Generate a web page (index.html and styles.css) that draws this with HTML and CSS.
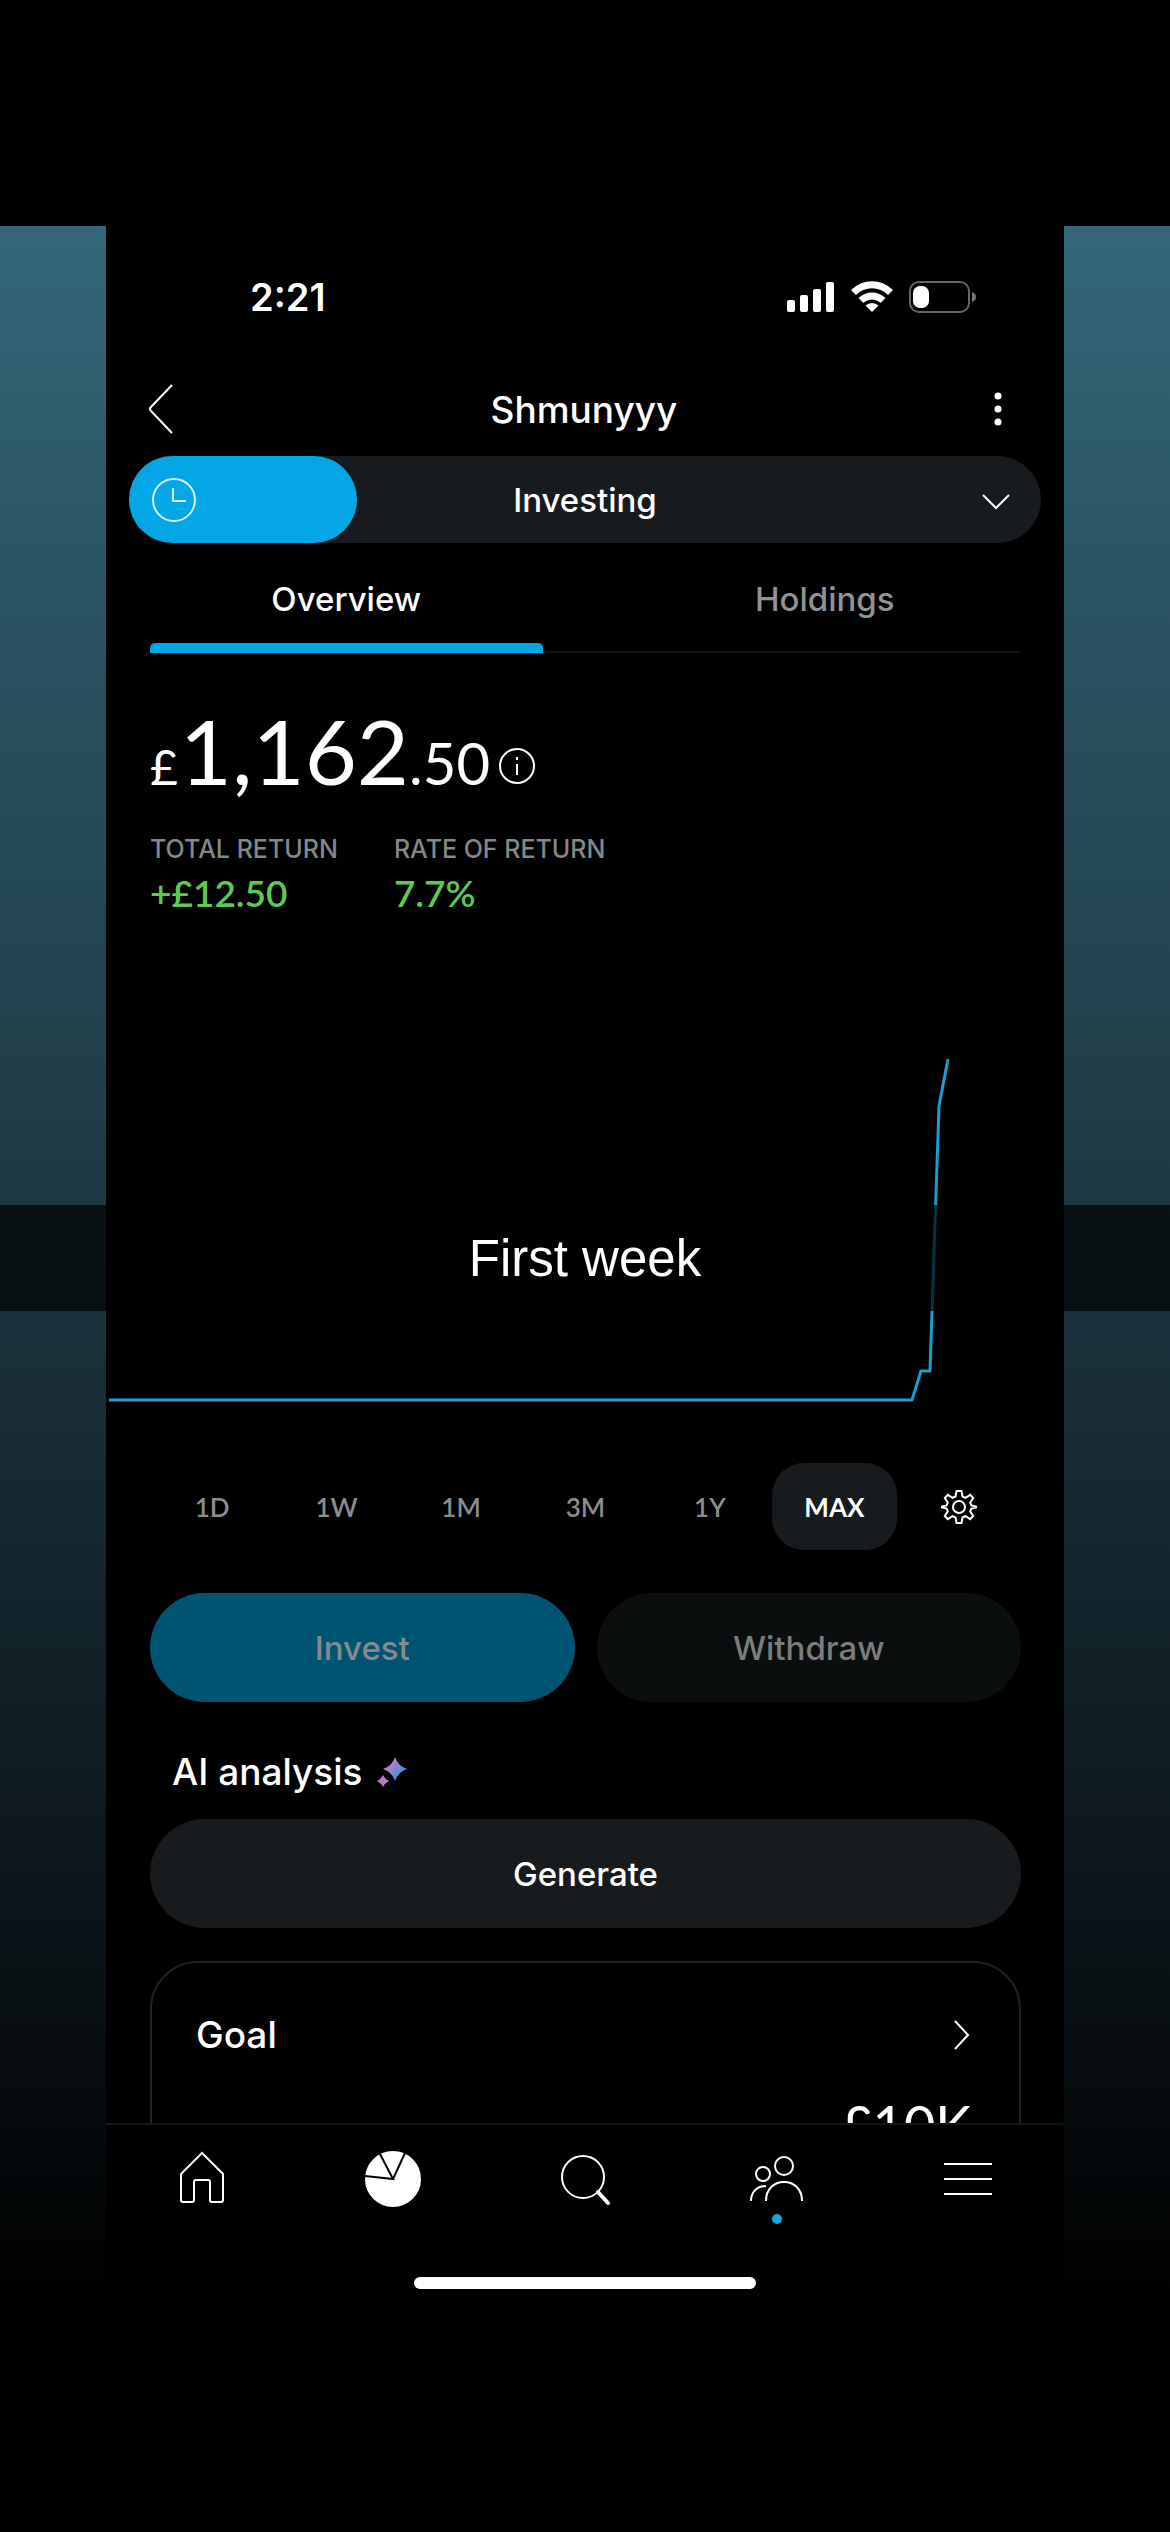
FILE: index.html
```html
<!DOCTYPE html>
<html lang="en">
<head>
  <meta charset="UTF-8">
  <meta name="viewport" content="width=device-width, initial-scale=1.0">
  <title>Shmunyyy - Investing</title>
  <link rel="stylesheet" href="styles.css">
</head>
<body>
  <div class="story">
    <div class="phone">
      <div class="status-bar">
        <span class="clock">2:21</span>
        <div class="status-icons">
          <svg class="signal" width="48" height="32" viewBox="0 0 48 32">
            <rect x="0" y="19" width="8" height="12" rx="2"/>
            <rect x="13" y="14" width="8" height="17" rx="2"/>
            <rect x="26" y="8" width="8" height="23" rx="2"/>
            <rect x="39" y="1" width="8" height="30" rx="2"/>
          </svg>
          <svg class="wifi" width="42" height="32" viewBox="0 0 42 32">
            <path d="M2.500 11.500a26 26 0 0 1 37 0"/>
            <path d="M10 19.500a15.500 15.500 0 0 1 22 0"/>
            <path d="M21 31l-6.500-6.500a9.500 9.500 0 0 1 13 0z" fill="#fff" stroke="none"/>
          </svg>
          <svg class="battery" width="67" height="32" viewBox="0 0 67 32">
            <rect x="1" y="1" width="59" height="30" rx="9" stroke="#666"/>
            <rect x="4" y="5" width="16" height="22" rx="7" fill="#fff" stroke="none"/>
            <path d="M63 11c3 1 4 3 4 5s-1 4-4 5z" fill="#777" stroke="none"/>
          </svg>
        </div>
      </div>

      <header class="header">
        <button class="icon-btn" type="button" aria-label="Back">
          <svg width="26" height="52" viewBox="0 0 26 52"><path d="M24 2L3 24q-2 2 0 4l21 22"/></svg>
        </button>
        <h1>Shmunyyy</h1>
        <button class="icon-btn more" type="button" aria-label="More">
          <svg width="8" height="36" viewBox="0 0 8 36"><circle cx="4" cy="5" r="3.500"/><circle cx="4" cy="18" r="3.500"/><circle cx="4" cy="31" r="3.500"/></svg>
        </button>
      </header>

      <div class="account">
        <select id="account" aria-label="Account">
          <option>Investing</option>
        </select>
        <div class="account-badge">
          <svg width="46" height="46" viewBox="0 0 46 46"><circle cx="23" cy="23" r="21"/><path d="M22 11v13h13"/></svg>
        </div>
        <svg class="account-arrow" width="28" height="16" viewBox="0 0 28 16"><path d="M1 1l13 13L27 1"/></svg>
      </div>

      <main class="content">
        <div class="tabs" role="tablist">
          <button class="tab active" type="button" role="tab" aria-selected="true">Overview</button>
          <button class="tab" type="button" role="tab" aria-selected="false">Holdings</button>
        </div>

        <div class="balance">
          <span class="currency">£</span><span class="whole">1,162</span><span class="pence">.50</span>
          <svg width="38" height="38" viewBox="0 0 38 38"><circle cx="19" cy="19" r="17"/><path d="M19 17v11M19 10v3"/></svg>
        </div>

        <dl class="returns">
          <div>
            <dt>TOTAL RETURN</dt>
            <dd>+£12.50</dd>
          </div>
          <div>
            <dt>RATE OF RETURN</dt>
            <dd>7.7%</dd>
          </div>
        </dl>

        <svg class="chart" viewBox="0 0 958 420"><path d="M3 380H806L815 351H824L833 86L842 39"/></svg>

        <div class="ranges">
          <button type="button">1D</button>
          <button type="button">1W</button>
          <button type="button">1M</button>
          <button type="button">3M</button>
          <button type="button">1Y</button>
          <button type="button" class="selected">MAX</button>
          <button type="button" aria-label="Chart settings">
            <svg width="36" height="36" viewBox="0 0 36 36">
              <path d="M15.500 2h5l1 5.500 3 1.300 4.700-3 3 3.200-3 4.500 1.200 3 4.600 1v1l-4.600 1-1.200 3 3 4.500-3 3.200-4.700-3-3 1.300-1 5.500h-5l-1-5.500-3-1.300-4.700 3-3-3.200 3-4.500-1.200-3-4.600-1v-1l4.600-1 1.200-3-3-4.500 3-3.200 4.700 3 3-1.300z"/>
              <circle cx="18" cy="18" r="6"/>
            </svg>
          </button>
        </div>

        <div class="actions">
          <button class="pill invest" type="button" disabled>Invest</button>
          <button class="pill withdraw" type="button" disabled>Withdraw</button>
        </div>

        <h2 class="ai-title">AI analysis
          <svg width="30" height="30" viewBox="0 0 30 30">
            <defs>
              <linearGradient id="spark" x1="0" y1="0" x2="1" y2="1">
                <stop offset="0.25" stop-color="#c77fc4"/>
                <stop offset="0.7" stop-color="#4f8fdc"/>
              </linearGradient>
            </defs>
            <path fill="url(#spark)" d="M18 0q3 9 12 12q-9 3-12 12q-3-9-12-12q9-3 12-12z"/>
            <path fill="#bb7dc0" d="M6 18q2 4 6 6q-4 2-6 6q-2-4-6-6q4-2 6-6z"/>
          </svg>
        </h2>
        <button class="pill generate" type="button">Generate</button>

        <section class="card">
          <div class="card-head">
            <h2>Goal</h2>
            <svg width="18" height="32" viewBox="0 0 18 32"><path d="M2 2l13 14L2 30"/></svg>
          </div>
          <p class="goal-amount">£10K</p>
        </section>
      </main>

      <nav class="tab-bar">
        <a href="#" aria-label="Home">
          <svg width="60" height="60" viewBox="0 0 60 60"><path d="M30 4L9 25v26q0 2 2 2h9q2 0 2-2V33q0-2 2-2h12q2 0 2 2v18q0 2 2 2h9q2 0 2-2V25z"/></svg>
        </a>
        <a href="#" aria-label="Portfolio">
          <svg width="60" height="60" viewBox="0 0 60 60"><circle cx="30" cy="30" r="27" fill="#fff"/><path stroke="#000" d="M2 27l28 3L17 5M30 30L42 4"/></svg>
        </a>
        <a href="#" aria-label="Search">
          <svg width="60" height="60" viewBox="0 0 60 60"><circle cx="28" cy="28" r="21"/><path stroke-width="4" stroke-linecap="round" d="M43 43l10 11"/></svg>
        </a>
        <a href="#" aria-label="Social">
          <svg width="60" height="60" viewBox="0 0 60 60"><circle cx="37" cy="17" r="9"/><circle cx="16" cy="25" r="7"/><path d="M19 52c0-12 8-19 18-19s18 7 18 19M4 52c0-9 6-15 15-15"/></svg>
          <span class="dot"></span>
        </a>
        <a href="#" aria-label="Menu">
          <svg width="60" height="60" viewBox="0 0 60 60"><path d="M6 15h48M6 30h48M6 45h48"/></svg>
        </a>
      </nav>
      <div class="home-indicator"></div>
    </div>

    <div class="caption">First week</div>
  </div>
</body>
</html>
```
FILE: styles.css
```css
* {
  box-sizing: border-box;
}
body {
  margin: 0;
  padding: 226px 0;
  height: 100vh;
  display: flex;
  background: #000;
  color: #fff;
  font-family: Inter, "Liberation Sans", sans-serif;
}
h1, h2, p, dl, dd {
  margin: 0;
  font-weight: 500;
}
button, select {
  border: none;
  padding: 0;
  background: none;
  color: inherit;
  font-family: inherit;
}
svg {
  fill: none;
  stroke: #fff;
  stroke-width: 2;
}
.story {
  position: relative;
  flex: 1;
  min-width: 0;
  padding: 0 106px;
  background: linear-gradient(#336779, #2c5665 15%, #22424e 38%, #1b323c 52%, #0f1c22 74%, #060b0e 90%, #000);
}
.phone {
  height: 100%;
  display: flex;
  flex-direction: column;
  background: #000;
}

/* status bar */
.status-bar {
  flex: none;
  display: flex;
  justify-content: space-between;
  align-items: center;
  height: 142px;
  padding: 0 88px 0 144px;
}
.clock {
  font-size: 38px;
  font-weight: 600;
}
.status-icons {
  display: flex;
  gap: 16px;
}
.signal {
  fill: #fff;
  stroke: none;
}
.wifi {
  stroke-width: 7;
}

.header {
  flex: none;
  display: flex;
  justify-content: space-between;
  align-items: center;
  height: 82px;
  padding: 0 62px 0 42px;
}
.header h1 {
  font-size: 37px;
}
.icon-btn {
  display: flex;
}
.more svg {
  fill: #fff;
  stroke: none;
}

/* account picker */
.account {
  flex: none;
  position: relative;
  height: 87px;
  margin: 6px 23px 0;
  border-radius: 44px;
  background: #181b1d;
}
.account select {
  width: 100%;
  height: 100%;
  appearance: none;
  font-size: 33px;
  font-weight: 500;
  text-align: center;
  text-align-last: center;
}
.account-badge {
  position: absolute;
  top: 0;
  left: 0;
  width: 25%;
  height: 100%;
  padding-left: 22px;
  display: flex;
  align-items: center;
  border-radius: 44px;
  background: #04a6e6;
  pointer-events: none;
}
.account-badge svg {
  stroke: #d9f6ff;
}
.account-arrow {
  position: absolute;
  top: 38px;
  right: 31px;
  pointer-events: none;
}

.content {
  flex: 1;
  min-height: 0;
  overflow: hidden;
  padding: 0 43px 0 44px;
}
.tabs {
  display: grid;
  grid-template-columns: 1fr 1fr;
  gap: 86px;
  height: 110px;
  border-bottom: 2px solid #111;
}
.tab {
  position: relative;
  padding-top: 3px;
  font-size: 33px;
  font-weight: 500;
  color: #919395;
}
.tab.active {
  color: #fff;
}
.tab.active::after {
  content: "";
  position: absolute;
  left: 0;
  right: 0;
  bottom: -2px;
  height: 10px;
  border-radius: 5px 5px 0 0;
  background: #04a6e6;
}

.balance {
  display: flex;
  align-items: baseline;
  height: 120px;
  margin-top: 44px;
  font-family: Lato, Inter, sans-serif;
  line-height: 106px;
}
.currency {
  font-size: 48px;
}
.whole {
  margin-left: 2px;
  font-size: 90px;
  font-weight: 400;
}
.pence {
  font-size: 58px;
}
.balance svg {
  margin-left: 8px;
}

.returns {
  display: flex;
  gap: 56px;
  margin-top: 16px;
}
.returns dt {
  font-size: 25px;
  line-height: 32px;
  color: #858789;
}
.returns dd {
  margin-top: 6px;
  font-family: Lato, Inter, sans-serif;
  font-size: 37px;
  font-weight: 600;
  line-height: 44px;
  color: #5ccb50;
}

/* the chart runs edge to edge, past the content padding */
.chart {
  display: block;
  width: calc(100% + 87px);
  margin: 105px -43px 0 -44px;
  stroke: #189fd0;
  stroke-width: 3;
  stroke-linejoin: round;
}

.ranges {
  display: grid;
  grid-template-columns: repeat(7, 1fr);
  margin-top: 23px;
}
.ranges button {
  display: flex;
  align-items: center;
  justify-content: center;
  height: 87px;
  border-radius: 32px;
  font-family: Lato, Inter, sans-serif;
  font-size: 26px;
  font-weight: 600;
  color: #8b8d8f;
}
.ranges .selected {
  background: #181b1d;
  color: #fff;
  font-weight: 700;
}

.actions {
  display: grid;
  grid-template-columns: 1fr 1fr;
  gap: 22px;
  margin-top: 43px;
}
.pill {
  height: 109px;
  border-radius: 55px;
  background: #181b1d;
  font-size: 33px;
  font-weight: 500;
}
.invest {
  background: #005371;
  color: #848b90;
}
.withdraw {
  background: #0b0e0e;
  color: #7d7d7d;
}
.ai-title {
  display: flex;
  align-items: center;
  gap: 14px;
  margin: 48px 0 25px 22px;
  font-size: 37px;
  line-height: 44px;
}
.ai-title svg {
  stroke: none;
}
.generate {
  width: 100%;
}
.card {
  height: 300px;
  margin-top: 33px;
  padding: 50px 48px 0 44px;
  border: 2px solid #222;
  border-radius: 48px;
}
.card-head {
  display: flex;
  justify-content: space-between;
  align-items: center;
  line-height: 44px;
}
.card-head h2 {
  font-size: 37px;
}
.goal-amount {
  margin-top: 36px;
  font-family: Lato, Inter, sans-serif;
  font-size: 54px;
  font-weight: 400;
  line-height: 64px;
  text-align: right;
}

.tab-bar {
  flex: none;
  display: grid;
  grid-template-columns: repeat(5, 1fr);
  height: 154px;
  padding-top: 24px;
  border-top: 2px solid #161616;
}
.tab-bar a {
  position: relative;
  display: flex;
  justify-content: center;
  align-items: flex-start;
}
.dot {
  position: absolute;
  top: 65px;
  width: 10px;
  height: 10px;
  border-radius: 50%;
  background: #18a4dc;
}
.home-indicator {
  flex: none;
  width: 342px;
  height: 12px;
  margin: 0 auto 17px;
  border-radius: 6px;
  background: #fff;
}

/* dark strip with the caption, laid over the whole story */
.caption {
  position: absolute;
  left: 0;
  right: 0;
  top: 979px;
  height: 106px;
  display: flex;
  align-items: center;
  justify-content: center;
  background: rgba(0, 0, 0, 0.68);
  font-family: "Liberation Sans", Arial, sans-serif;
  font-size: 51px;
}
```
